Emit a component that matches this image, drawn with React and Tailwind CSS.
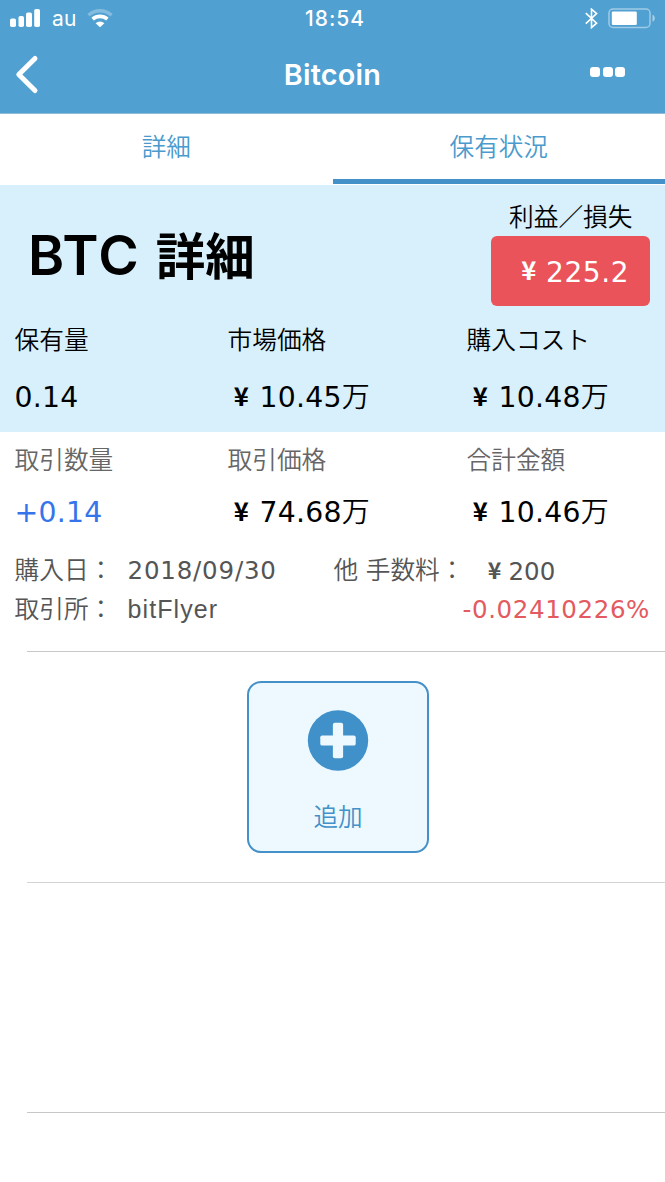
import React from 'react';

const holding = [
  { label: '保有量', value: '0.14' },
  { label: '市場価格', value: '10.45', money: true },
  { label: '購入コスト', value: '10.48', money: true },
];

const trade = [
  { label: '取引数量', value: '+0.14', valueClass: 'text-[#3574ea]' },
  { label: '取引価格', value: '74.68', money: true },
  { label: '合計金額', value: '10.46', money: true },
];

const Yen = ({ className }) => (
  <span className={`inline-block text-center font-["Noto_Sans_CJK_JP",sans-serif] leading-none font-bold ${className}`}>¥</span>
);

const StatusBar = () => (
  <div className="flex h-9 items-center text-white">
    <svg className="ml-[10px] h-[18px] w-[30px]" viewBox="0 0 30 18" fill="currentColor">
      <rect x="0" y="9.5" width="6" height="8.5" rx="1.8" />
      <rect x="8.5" y="7" width="5.5" height="11" rx="1.8" />
      <rect x="16" y="3.5" width="6" height="14.5" rx="1.8" />
      <rect x="24.2" y="0" width="5.8" height="18" rx="1.8" />
    </svg>
    <span className="mt-[2px] ml-3 w-[24px] text-[21px] tracking-[0.3px]">au</span>
    <svg className="ml-[11px] h-[19px] w-[26px]" viewBox="0 0 26 19" fill="none" stroke="currentColor">
      <path d="M1.5 6.3A17 17 0 0 1 24.5 6.3" strokeWidth="3.4" opacity="0.3" />
      <path d="M5.6 10.2A11 11 0 0 1 20.4 10.2" strokeWidth="3.6" />
      <path d="M13 18.3L8.6 14.2A6.5 6.5 0 0 1 17.4 14.2Z" fill="currentColor" stroke="none" />
    </svg>
    <span className="mt-[2px] ml-[192px] w-[60px] text-[21px] font-medium tracking-[1px]">18:54</span>
    <svg className="ml-[220px] h-[21px] w-[13px]" viewBox="0 0 13 21" fill="none" stroke="currentColor" strokeWidth="1.6">
      <path d="M0.8 5.2L11.6 15.2L6.5 19.6V1.2L11.6 5.6L0.8 15.6" />
    </svg>
    <svg className="ml-[10px] h-[21px] w-[48px]" viewBox="0 0 48 21">
      <rect x="1" y="1" width="41" height="18.5" rx="4" fill="none" stroke="#fff" strokeWidth="1.5" opacity="0.45" />
      <rect x="3.8" y="3.5" width="25" height="13.5" rx="1.2" fill="#fff" />
      <path d="M44.5 6.8C47.6 8 47.6 12.6 44.5 13.8Z" fill="#fff" opacity="0.5" />
    </svg>
  </div>
);

const NavBar = () => (
  <div className="flex h-[78px] items-start justify-between text-white">
    <svg className="mt-[18px] ml-[14px] h-[42px] w-[26px]" viewBox="0 0 26 42" fill="none" stroke="currentColor" strokeWidth="5" strokeLinecap="round" strokeLinejoin="round">
      <path d="M21 4.5L4.8 20.5L21 36.5" />
    </svg>
    <h1 className="mt-5 ml-[35px] text-[28.8px] leading-[38px] font-semibold tracking-[0.2px]">Bitcoin</h1>
    <div className="mt-[31px] mr-[40px] flex gap-[2.5px]">
      <i className="size-[10px] rounded-[3px] bg-white" />
      <i className="size-[10px] rounded-[3px] bg-white" />
      <i className="size-[10px] rounded-[3px] bg-white" />
    </div>
  </div>
);

const Columns = ({ items, labelClass, gapClass }) => (
  <div className="grid grid-cols-[213px_239px_1fr] pl-[14.5px]">
    {items.map((item) => (
      <div key={item.label}>
        <div className={`text-[24.7px] leading-9 font-[350] ${labelClass}`}>{item.label}</div>
        <div className={`flex h-9 items-baseline font-["DejaVu_Sans",sans-serif] text-[28.3px] leading-9 tracking-[0.25px] whitespace-nowrap ${gapClass} ${item.valueClass || 'text-black'}`}>
          {item.money && <Yen className="mr-[4px] w-7 self-start pt-[2px] text-[25.5px]" />}
          {item.value}
          {item.money && <span className="font-['Noto_Sans_CJK_JP',sans-serif] text-[28px] leading-none font-[350]">万</span>}
        </div>
      </div>
    ))}
  </div>
);

export default function App() {
  return (
    <div className='h-[1182px] w-[665px] overflow-hidden bg-white font-["Noto_Sans_CJK_JP",sans-serif]'>
      <header className="h-[114px] border-b border-[#8dbbd8] bg-[#50a0d1] font-[Inter,sans-serif]">
        <StatusBar />
        <NavBar />
      </header>

      <nav className="grid h-[71px] grid-cols-2 text-center text-[24.6px] leading-[62px] font-[350] text-[#4a9acd]">
        <div>詳細</div>
        <div className="h-[70px] border-b-[5px] border-[#4490c8]">保有状況</div>
      </nav>

      <section className="h-[247px] bg-[#d8f0fb]">
        <div className="flex h-[135px] items-start justify-between">
          <h2 className="mt-[33px] ml-[28px] flex h-[72px] items-baseline text-[49.5px] leading-[72px] font-bold text-black">
            <span className="font-[Inter,sans-serif] text-[55px] font-semibold tracking-[1.2px]">BTC</span>
            <span className="ml-[16px]">詳細</span>
          </h2>
          <div className="mt-[13px] mr-[15px] w-[159px]">
            <div className="pl-[18px] text-[24.7px] leading-[34px] font-[350] whitespace-nowrap text-black">利益／損失</div>
            <div className='mt-[4px] flex h-[70px] items-baseline rounded-md bg-[#ea535a] pl-[24px] font-["DejaVu_Sans",sans-serif] text-[28px] leading-[74px] tracking-[0.6px] text-white'>
              <Yen className="mr-[3px] w-7 self-start pt-[20px] text-[25.5px]" />
              225.2
            </div>
          </div>
        </div>
        <Columns items={holding} labelClass="text-black" gapClass="mt-6" />
      </section>

      <section className="h-[219px] pt-[8px]">
        <Columns items={trade} labelClass="text-[#666]" gapClass="mt-[19px]" />
        <div className="mt-[18px] flex h-[39px] items-baseline pl-[14.5px] text-[24.7px] leading-[38px] font-[350] whitespace-nowrap text-[#555]">
          <span className="w-[113px]">購入日：</span>
          <span className='w-[206px] font-["DejaVu_Sans",sans-serif] text-[24.5px] font-normal tracking-[0.8px]'>2018/09/30</span>
          <span className="w-[147px] [word-spacing:2px]">他 手数料：</span>
          <span className='flex font-["DejaVu_Sans",sans-serif] text-[24.5px] font-normal'>
            <Yen className="w-[28px] pt-[5px] text-[23px]" />200
          </span>
        </div>
        <div className="flex h-[39px] items-baseline pl-[14.5px] text-[24.7px] leading-[38px] font-[350] whitespace-nowrap text-[#555]">
          <span className="w-[113px]">取引所：</span>
          <span className='font-["Liberation_Sans",sans-serif] text-[25px] font-normal tracking-[1.1px]'>bitFlyer</span>
          <span className='mr-[15px] ml-auto font-["DejaVu_Sans",sans-serif] text-[24.5px] font-normal tracking-[0.6px] text-[#e35a60]'>-0.02410226%</span>
        </div>
      </section>

      <div className="ml-[27px] h-[231px] border-t border-[#c8c8c8] pt-[29px] pl-[220px]">
        <button className="flex h-[172px] w-[182px] flex-col items-center rounded-[14px] border-2 border-[#4490c8] bg-[#edf9ff] pt-[26.5px] text-[24.6px] font-[350] text-[#4490c8]">
          <svg className="h-[61px] w-[62px]" viewBox="0 0 62 62">
            <circle cx="31" cy="31" r="30.7" fill="#4090ca" />
            <rect x="13" y="25.8" width="36" height="10.4" rx="2" fill="#edf9ff" />
            <rect x="25.8" y="13" width="10.4" height="36" rx="2" fill="#edf9ff" />
          </svg>
          <span className="mt-[26px] leading-9">追加</span>
        </button>
      </div>
      <div className="ml-[27px] h-[230px] border-t border-[#d4d4d4]" />
      <div className="ml-[27px] border-t border-[#c8c8c8]" />
    </div>
  );
}
